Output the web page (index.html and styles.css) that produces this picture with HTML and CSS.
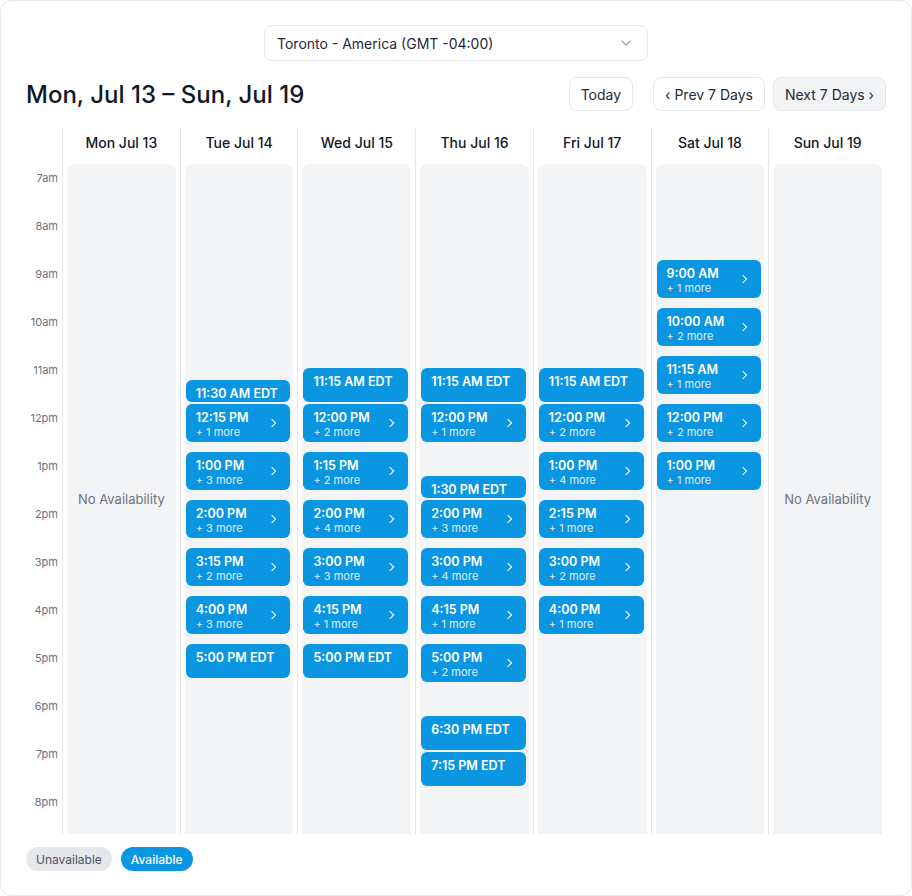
FILE: index.html
```html
<!DOCTYPE html>
<html lang="en">
<head>
    <meta charset="UTF-8">
    <meta name="viewport" content="width=device-width, initial-scale=1.0">
    <title>Availability</title>
    <link rel="stylesheet" href="styles.css">
</head>
<body>
    <div class="card">
        <div class="tz-row">
            <div class="tz-select">
                <span>Toronto - America (GMT -04:00)</span>
                <svg width="10" height="6" viewBox="0 0 10 6"><path d="M1 1l4 4 4-4" fill="none" stroke="#9ca3af" stroke-width="1.2" stroke-linecap="round" stroke-linejoin="round"/></svg>
            </div>
        </div>

        <div class="toolbar">
            <h1>Mon, Jul 13 – Sun, Jul 19</h1>
            <div class="nav">
                <button class="btn">Today</button>
                <div class="nav-pair">
                    <button class="btn">‹ Prev 7 Days</button>
                    <button class="btn btn-muted">Next 7 Days ›</button>
                </div>
            </div>
        </div>

        <div class="week">
            <div class="gutter">
                <div class="gutter-head"></div>
                <div class="hours">
                    <div class="hour">7am</div>
                    <div class="hour">8am</div>
                    <div class="hour">9am</div>
                    <div class="hour">10am</div>
                    <div class="hour">11am</div>
                    <div class="hour">12pm</div>
                    <div class="hour">1pm</div>
                    <div class="hour">2pm</div>
                    <div class="hour">3pm</div>
                    <div class="hour">4pm</div>
                    <div class="hour">5pm</div>
                    <div class="hour">6pm</div>
                    <div class="hour">7pm</div>
                    <div class="hour">8pm</div>
                </div>
            </div>

            <div class="day">
                <div class="day-head">Mon Jul 13</div>
                <div class="day-body empty"><span>No Availability</span></div>
            </div>

            <div class="day">
                <div class="day-head">Tue Jul 14</div>
                <div class="day-body">
                    <div class="slot short" style="top:216px"><div class="slot-text"><b>11:30 AM EDT</b></div></div>
                    <div class="slot" style="top:240px"><div class="slot-text"><b>12:15 PM</b><small>+ 1 more</small></div><i class="chev"></i></div>
                    <div class="slot" style="top:288px"><div class="slot-text"><b>1:00 PM</b><small>+ 3 more</small></div><i class="chev"></i></div>
                    <div class="slot" style="top:336px"><div class="slot-text"><b>2:00 PM</b><small>+ 3 more</small></div><i class="chev"></i></div>
                    <div class="slot" style="top:384px"><div class="slot-text"><b>3:15 PM</b><small>+ 2 more</small></div><i class="chev"></i></div>
                    <div class="slot" style="top:432px"><div class="slot-text"><b>4:00 PM</b><small>+ 3 more</small></div><i class="chev"></i></div>
                    <div class="slot single" style="top:480px"><div class="slot-text"><b>5:00 PM EDT</b></div></div>
                </div>
            </div>

            <div class="day">
                <div class="day-head">Wed Jul 15</div>
                <div class="day-body">
                    <div class="slot single" style="top:204px"><div class="slot-text"><b>11:15 AM EDT</b></div></div>
                    <div class="slot" style="top:240px"><div class="slot-text"><b>12:00 PM</b><small>+ 2 more</small></div><i class="chev"></i></div>
                    <div class="slot" style="top:288px"><div class="slot-text"><b>1:15 PM</b><small>+ 2 more</small></div><i class="chev"></i></div>
                    <div class="slot" style="top:336px"><div class="slot-text"><b>2:00 PM</b><small>+ 4 more</small></div><i class="chev"></i></div>
                    <div class="slot" style="top:384px"><div class="slot-text"><b>3:00 PM</b><small>+ 3 more</small></div><i class="chev"></i></div>
                    <div class="slot" style="top:432px"><div class="slot-text"><b>4:15 PM</b><small>+ 1 more</small></div><i class="chev"></i></div>
                    <div class="slot single" style="top:480px"><div class="slot-text"><b>5:00 PM EDT</b></div></div>
                </div>
            </div>

            <div class="day">
                <div class="day-head">Thu Jul 16</div>
                <div class="day-body">
                    <div class="slot single" style="top:204px"><div class="slot-text"><b>11:15 AM EDT</b></div></div>
                    <div class="slot" style="top:240px"><div class="slot-text"><b>12:00 PM</b><small>+ 1 more</small></div><i class="chev"></i></div>
                    <div class="slot short" style="top:312px"><div class="slot-text"><b>1:30 PM EDT</b></div></div>
                    <div class="slot" style="top:336px"><div class="slot-text"><b>2:00 PM</b><small>+ 3 more</small></div><i class="chev"></i></div>
                    <div class="slot" style="top:384px"><div class="slot-text"><b>3:00 PM</b><small>+ 4 more</small></div><i class="chev"></i></div>
                    <div class="slot" style="top:432px"><div class="slot-text"><b>4:15 PM</b><small>+ 1 more</small></div><i class="chev"></i></div>
                    <div class="slot" style="top:480px"><div class="slot-text"><b>5:00 PM</b><small>+ 2 more</small></div><i class="chev"></i></div>
                    <div class="slot single" style="top:552px"><div class="slot-text"><b>6:30 PM EDT</b></div></div>
                    <div class="slot single" style="top:588px"><div class="slot-text"><b>7:15 PM EDT</b></div></div>
                </div>
            </div>

            <div class="day">
                <div class="day-head">Fri Jul 17</div>
                <div class="day-body">
                    <div class="slot single" style="top:204px"><div class="slot-text"><b>11:15 AM EDT</b></div></div>
                    <div class="slot" style="top:240px"><div class="slot-text"><b>12:00 PM</b><small>+ 2 more</small></div><i class="chev"></i></div>
                    <div class="slot" style="top:288px"><div class="slot-text"><b>1:00 PM</b><small>+ 4 more</small></div><i class="chev"></i></div>
                    <div class="slot" style="top:336px"><div class="slot-text"><b>2:15 PM</b><small>+ 1 more</small></div><i class="chev"></i></div>
                    <div class="slot" style="top:384px"><div class="slot-text"><b>3:00 PM</b><small>+ 2 more</small></div><i class="chev"></i></div>
                    <div class="slot" style="top:432px"><div class="slot-text"><b>4:00 PM</b><small>+ 1 more</small></div><i class="chev"></i></div>
                </div>
            </div>

            <div class="day">
                <div class="day-head">Sat Jul 18</div>
                <div class="day-body">
                    <div class="slot" style="top:96px"><div class="slot-text"><b>9:00 AM</b><small>+ 1 more</small></div><i class="chev"></i></div>
                    <div class="slot" style="top:144px"><div class="slot-text"><b>10:00 AM</b><small>+ 2 more</small></div><i class="chev"></i></div>
                    <div class="slot" style="top:192px"><div class="slot-text"><b>11:15 AM</b><small>+ 1 more</small></div><i class="chev"></i></div>
                    <div class="slot" style="top:240px"><div class="slot-text"><b>12:00 PM</b><small>+ 2 more</small></div><i class="chev"></i></div>
                    <div class="slot" style="top:288px"><div class="slot-text"><b>1:00 PM</b><small>+ 1 more</small></div><i class="chev"></i></div>
                </div>
            </div>

            <div class="day">
                <div class="day-head">Sun Jul 19</div>
                <div class="day-body empty"><span>No Availability</span></div>
            </div>
        </div>

        <div class="legend">
            <span class="pill pill-off">Unavailable</span>
            <span class="pill pill-on">Available</span>
        </div>
    </div>
</body>
</html>
```

FILE: styles.css
```css
* {
    box-sizing: border-box;
}
body {
    font-family: Inter, "Noto Sans", sans-serif;
    margin: 0;
    padding: 0;
    background-color: #fff;
    color: #111827;
}
.card {
    width: 912px;
    height: 896px;
    border: 1px solid #e5e7eb;
    border-radius: 12px;
    padding: 24px 25px 0 25px;
    background-color: #fff;
}
.tz-row {
    display: flex;
    justify-content: center;
}
.tz-select {
    width: 384px;
    height: 36px;
    border: 1px solid #e5e7eb;
    border-radius: 8px;
    padding: 0 16px 0 12px;
    display: flex;
    align-items: center;
    justify-content: space-between;
    font-size: 14px;
    color: #1f2937;
}
.toolbar {
    margin-top: 16px;
    height: 34px;
    display: flex;
    align-items: center;
    justify-content: space-between;
}
.toolbar h1 {
    margin: 0;
    font-size: 24px;
    font-weight: 500;
    color: #111827;
}
.nav {
    display: flex;
    gap: 20px;
}
.nav-pair {
    display: flex;
    gap: 8px;
}
.btn {
    height: 34px;
    padding: 0 11px;
    border: 1px solid #e5e7eb;
    border-radius: 8px;
    background-color: #fff;
    font-family: inherit;
    font-size: 14px;
    color: #1f2937;
}
.btn-muted {
    background-color: #f3f4f6;
}
.week {
    margin-top: 16px;
    display: grid;
    grid-template-columns: 36px repeat(7, 1fr);
    height: 707px;
}
.gutter-head, .day-head {
    height: 37px;
}
.hours {
    height: 670px;
    overflow: hidden;
}
.hour {
    height: 48px;
    padding: 7px 4px 0 0;
    text-align: right;
    font-size: 11px;
    line-height: 14px;
    color: #6b7280;
}
.day {
    border-left: 1px solid #e5e7eb;
    padding: 0 4px 0 4px;
    display: flex;
    flex-direction: column;
}
.day-head {
    display: flex;
    align-items: center;
    justify-content: center;
    padding-bottom: 7px;
    font-size: 14px;
    font-weight: 500;
    color: #111827;
}
.day-body {
    position: relative;
    height: 670px;
    background-color: #f3f4f6;
    border-radius: 8px 8px 0 0;
}
.day-body.empty {
    display: flex;
    align-items: center;
    justify-content: center;
}
.day-body.empty span {
    font-size: 13px;
    color: #6b7280;
}
.slot {
    position: absolute;
    left: 1px;
    right: 3px;
    height: 38px;
    background-color: #0b96e1;
    border-radius: 6px;
    color: #fff;
    display: flex;
    justify-content: space-between;
    overflow: hidden;
}
.slot.single {
    height: 34px;
}
.slot.short {
    height: 22px;
}
.slot-text {
    padding: 6px 0 0 10px;
    display: flex;
    flex-direction: column;
}
.slot-text b {
    font-size: 12.5px;
    font-weight: 600;
    line-height: 15px;
}
.slot-text small {
    font-size: 11px;
    line-height: 15px;
    opacity: 0.85;
}
.chev {
    width: 6px;
    height: 6px;
    margin: 16px 15px 0 0;
    border-top: 1.6px solid #fff;
    border-right: 1.6px solid #fff;
    transform: rotate(45deg);
}
.legend {
    margin-top: 13px;
    display: flex;
    gap: 9px;
}
.pill {
    height: 24px;
    padding: 0 10px;
    border-radius: 12px;
    display: flex;
    align-items: center;
    font-size: 12px;
}
.pill-off {
    background-color: #e5e7eb;
    color: #4b5563;
}
.pill-on {
    background-color: #0b96e1;
    color: #fff;
    font-weight: 500;
}
```
